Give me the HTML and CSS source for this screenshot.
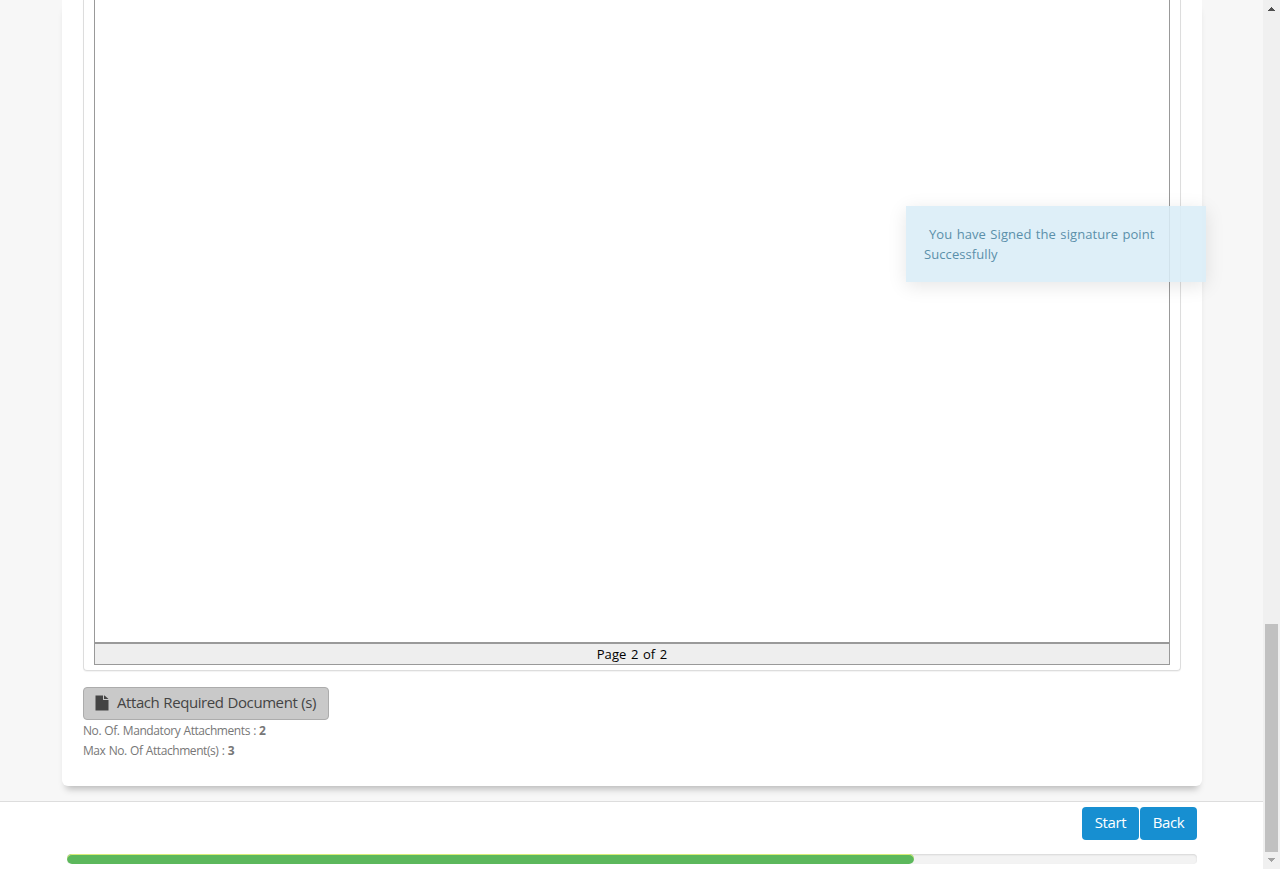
FILE: index.html
```html
<!DOCTYPE html>
<html lang="en">
<head>
<meta charset="utf-8">
<title>Sign document</title>
<link rel="stylesheet" href="styles.css">
</head>
<body>
<div class="app">
  <div class="view">
    <main class="content">
      <section class="card">
        <div class="viewer">
          <div class="page"></div>
          <div class="page-label">Page 2 of 2</div>
        </div>
        <button class="attach" type="button">
          <svg class="file-icon" width="14" height="16" viewBox="0 0 14 16"><path d="M.5 .5H8V5H13.500V15.500H.5ZM9 .5H9.500L13.500 4H9Z" fill="#444"/></svg>
          <span class="attach-label">Attach Required Document (s)</span>
        </button>
        <p class="note">No. Of. Mandatory Attachments : <b>2</b></p>
        <p class="note">Max No. Of Attachment(s) : <b>3</b></p>
      </section>
    </main>
    <footer class="footer">
      <div class="actions">
        <button class="btn" type="button">Start</button>
        <button class="btn" type="button">Back</button>
      </div>
      <div class="progress"><div class="bar" style="width:847px"></div></div>
    </footer>
  </div>
  <div class="scrollbar">
    <svg class="arrow" width="7" height="4" viewBox="0 0 7 4"><path d="M3 0h1v1h1v1h1v1h1v1H0V3h1V2h1V1h1z" fill="#505050"/></svg>
    <div class="thumb"></div>
    <svg class="arrow" width="7" height="4" viewBox="0 0 7 4"><path d="M0 0h7v1H6v1H5v1H4v1H3V3H2V2H1V1H0z" fill="#a3a3a3"/></svg>
  </div>
</div>
<div class="toast"><div class="toast-line first">You have Signed the signature point</div><div class="toast-line">Successfully</div></div>
</body>
</html>
```
FILE: styles.css
```css
* { box-sizing: border-box; }
body { margin: 0; overflow: hidden; background: #fff; font-family: "Segoe UI", "Open Sans", "Noto Sans", sans-serif; }
button { font-family: inherit; margin: 0; cursor: pointer; }
.app { display: flex; height: 869px; }
.view { width: 1263px; display: flex; flex-direction: column; }
.content { height: 801px; padding: 0 61px 15px 62px; background: #f7f7f7; overflow: hidden; }
.card { height: 786px; padding: 0 21px; background: #fff; border-radius: 0 0 6px 6px; box-shadow: 0 7px 7px -4px rgba(0, 0, 0, .25); display: flex; flex-direction: column; align-items: flex-start; }
.viewer { width: 1098px; height: 671px; padding: 0 10px 5px; border: 1px solid #ddd; border-top: 0; border-radius: 0 0 4px 4px; box-shadow: 0 1px 1px rgba(0, 0, 0, .05); }
.page { height: 643px; border: 1px solid #999; border-top: 0; }
.page-label { height: 22px; border: 1px solid #999; background: #eee; color: #000; font-size: 13px; line-height: 21px; letter-spacing: .1px; word-spacing: 1px; text-align: center; }
.attach { width: 246px; height: 33px; margin-top: 16px; padding: 0 11px 1px; display: flex; align-items: center; background: #c9c9c9; border: 1px solid #acacac; border-radius: 4px; color: #444; font-size: 15px; line-height: 20px; letter-spacing: -.42px; word-spacing: .5px; white-space: nowrap; }
.attach-label { padding-bottom: 2px; }
.file-icon { margin-right: 8px; flex: none; }
.note { margin: 0; height: 20px; color: #777; font-size: 12px; line-height: 20px; letter-spacing: -.42px; word-spacing: .5px; white-space: nowrap; }
.note:first-of-type { margin-top: 1px; }
.footer { height: 68px; padding: 5px 66px 5px 67px; border-top: 1px solid #ddd; background: #fff; }
.actions { display: flex; justify-content: flex-end; gap: 1px; }
.btn { width: 57px; height: 33px; padding: 0 0 4px; border: 0; border-radius: 4px; background: #178fd1; color: #fff; font-size: 15px; line-height: 20px; letter-spacing: -.4px; }
.progress { height: 10px; margin-top: 14px; border-radius: 4px; background: #f3f3f3; box-shadow: inset 0 1px 2px rgba(0, 0, 0, .12); overflow: hidden; }
.bar { height: 10px; border-radius: 5px; background: #5cb85c; box-shadow: inset 0 1px 0 #d7ec78; }
.scrollbar { width: 17px; padding: 7px 0 7px; background: #f0f0f0; display: flex; flex-direction: column; align-items: center; }
.arrow { flex: none; }
.thumb { width: 13px; height: 228px; margin-top: 613px; margin-bottom: 6px; background: #c1c1c1; flex: none; }
.toast { position: absolute; left: 906px; top: 206px; width: 300px; height: 76px; padding: 18px; background: rgba(217, 237, 247, .87); color: #5b90aa; box-shadow: 0 4px 18px rgba(0, 0, 0, .1); font-size: 13px; line-height: 20px; letter-spacing: .08px; word-spacing: .9px; white-space: nowrap; }
.first { padding-left: 5px; }
```
